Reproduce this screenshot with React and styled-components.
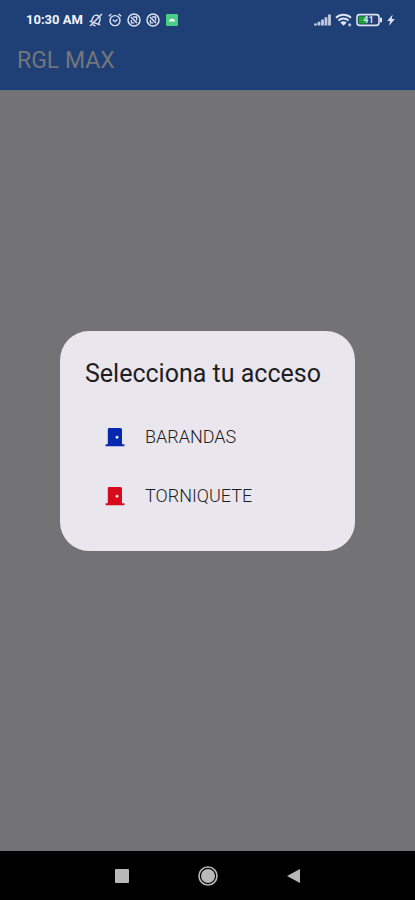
import React from 'react';
import styled, { createGlobalStyle } from 'styled-components';

const GlobalStyle = createGlobalStyle`
    * {
        box-sizing: border-box;
    }
    body {
        margin: 0;
        background-color: #737375;
        font-family: Roboto, sans-serif;
    }
`;
const Screen = styled.div`
    display: flex;
    flex-direction: column;
    min-height: 100vh;
`;
const Header = styled.header`
    background-color: #1f3f77;
    border-bottom: 1px solid #123a7c;
`;
const StatusBar = styled.div`
    display: flex;
    align-items: center;
    justify-content: space-between;
    height: 40px;
    padding: 0 20px 0 26px;
    color: #dde3f0;
`;
const StatusGroup = styled.div`
    display: flex;
    align-items: center;
    gap: ${props => props.$gap}px;
`;
const Clock = styled.span`
    margin-right: 1px;
    font-size: 13px;
    line-height: 16px;
    font-weight: 700;
    color: #f1f4fa;
`;
const StatusIcon = styled.svg`
    display: block;
    width: ${props => props.$width || 14}px;
    height: 14px;
    fill: none;
    stroke: currentColor;
    stroke-width: 1.4;
`;
const AppTitle = styled.h1`
    margin: 0;
    padding: 7px 17px 14px;
    font-size: 23px;
    line-height: 28px;
    font-weight: 400;
    color: #747678;
`;
const Content = styled.main`
    flex: 1;
    display: flex;
    flex-direction: column;
    justify-content: center;
    padding: 0 60px 59px;
`;
const Dialog = styled.section`
    padding: 26px 25px;
    border-radius: 29px;
    background-color: #e9e6ed;
`;
const DialogTitle = styled.h2`
    margin: 0 0 16px;
    font-size: 25px;
    line-height: 34px;
    font-weight: 400;
    color: #1e1d22;
    white-space: nowrap;
`;
const Option = styled.button`
    display: flex;
    align-items: center;
    gap: 20px;
    width: 100%;
    height: 59px;
    padding: 0 20px;
    border: none;
    background-color: transparent;
    font-family: inherit;
    font-size: 18px;
    line-height: 20px;
    font-weight: 300;
    color: #1e1d22;
    cursor: pointer;
`;
const DoorSvg = styled.svg`
    width: 20px;
    height: 20px;
    color: ${props => props.$color};
`;
const NavBar = styled.nav`
    display: flex;
    align-items: center;
    justify-content: center;
    gap: 62px;
    height: 49px;
    background-color: #000;
`;
const NavButton = styled.button`
    display: flex;
    padding: 0;
    border: none;
    background-color: transparent;
    cursor: pointer;
`;

const options = [
    { label: 'BARANDAS', color: '#0529ae' },
    { label: 'TORNIQUETE', color: '#d70b1c' },
];

const MutedIcon = () => (
    <StatusIcon viewBox='0 0 14 14'>
        <g transform='rotate(20 7 7)'>
            <path d='M3.2 10V6a3.8 3.8 0 0 1 7.6 0v4M1.4 10.2h11.2M5.4 12.6h3.2' />
        </g>
        <path d='M13 1 1 13' />
    </StatusIcon>
);

const AlarmIcon = () => (
    <StatusIcon viewBox='0 0 14 14'>
        <circle cx='7' cy='7.6' r='5' />
        <path d='M.8 3.2 3.4 1M13.2 3.2 10.6 1M4.7 6.7 7 8.7l2.6-2.2' />
    </StatusIcon>
);

const BlockedIcon = () => (
    <StatusIcon viewBox='0 0 14 14'>
        <circle cx='7' cy='7' r='6' strokeWidth='1.5' />
        <path d='m4 4 6 6' strokeWidth='1.6' />
        <path d='M6.2 4h3.4v3.4M4.4 7v2.8h2.8' strokeWidth='1.3' />
    </StatusIcon>
);

const AppIcon = () => (
    <StatusIcon viewBox='0 0 14 14'>
        <rect x='1' y='1' width='12' height='12' rx='1' fill='#4bce86' stroke='none' />
        <path d='M4 8.6a3 2.8 0 0 1 6 0z' fill='#eefaf3' stroke='none' />
    </StatusIcon>
);

const SignalIcon = () => (
    <StatusIcon $width={17} viewBox='0 0 17 14'>
        <path d='M1.5 12.5v-2M5 12.5V8.8M8.5 12.5V6.6M12 12.5V4.2M15.5 12.5V1.5' strokeWidth='2.8' opacity='0.85' />
    </StatusIcon>
);

const WifiIcon = () => (
    <StatusIcon $width={17} viewBox='0 0 17 14'>
        <path d='M1 4.8a10.8 10.8 0 0 1 15 0M3.4 7.6a7.2 7.2 0 0 1 10.2 0' strokeWidth='1.9' />
        <path d='M5.3 9.6a4.6 4.6 0 0 1 6.4 0l-3.2 3.2z' fill='currentColor' stroke='none' />
        <circle cx='14.7' cy='11.8' r='1.6' fill='currentColor' stroke='none' opacity='0.8' />
    </StatusIcon>
);

const BatteryIcon = () => (
    <StatusIcon $width={27} viewBox='0 0 27 14'>
        <rect x='1' y='1.6' width='22' height='10.8' rx='2.6' strokeWidth='1.6' />
        <path d='M25 4.8v4.4' strokeWidth='2' />
        <rect x='2.6' y='3.4' width='8' height='7.2' fill='#1fa62a' stroke='none' />
        <text
            x='12.4'
            y='10.2'
            textAnchor='middle'
            fontSize='9'
            fontWeight='700'
            fill='currentColor'
            stroke='none'
        >
            41
        </text>
    </StatusIcon>
);

const BoltIcon = () => (
    <StatusIcon $width={8} viewBox='0 0 8 14'>
        <path d='M5.6 1.5.2 8h2.9l-1 4.8L7.8 6H4.7z' fill='currentColor' stroke='none' />
    </StatusIcon>
);

const DoorIcon = ({ color }) => (
    <DoorSvg viewBox='0 0 20 20' $color={color} aria-hidden='true'>
        <path
            fill='currentColor'
            fillRule='evenodd'
            d='M4.2 1h11.2a1.6 1.6 0 0 1 1.6 1.6v14.6h2.4v2H.6v-2h2.2V2.4A1.4 1.4 0 0 1 4.2 1zm7.8 7.8a1.5 1.5 0 1 0 .1 0z'
        />
    </DoorSvg>
);

const App = () => {
    return (
        <>
            <GlobalStyle />
            <Screen>
                <Header>
                    <StatusBar>
                        <StatusGroup $gap={5}>
                            <Clock>10:30 AM</Clock>
                            <MutedIcon />
                            <AlarmIcon />
                            <BlockedIcon />
                            <BlockedIcon />
                            <AppIcon />
                        </StatusGroup>
                        <StatusGroup $gap={4}>
                            <SignalIcon />
                            <WifiIcon />
                            <BatteryIcon />
                            <BoltIcon />
                        </StatusGroup>
                    </StatusBar>
                    <AppTitle>RGL MAX</AppTitle>
                </Header>
                <Content>
                    <Dialog role='dialog' aria-labelledby='access-title'>
                        <DialogTitle id='access-title'>Selecciona tu acceso</DialogTitle>
                        {options.map(option => (
                            <Option key={option.label} type='button'>
                                <DoorIcon color={option.color} />
                                {option.label}
                            </Option>
                        ))}
                    </Dialog>
                </Content>
                <NavBar>
                    <NavButton type='button' aria-label='Recientes'>
                        <svg width='24' height='24' viewBox='0 0 24 24'>
                            <rect x='5' y='5' width='14' height='14' rx='1' fill='#b9b9b9' />
                        </svg>
                    </NavButton>
                    <NavButton type='button' aria-label='Inicio'>
                        <svg width='24' height='24' viewBox='0 0 24 24'>
                            <circle cx='12' cy='12' r='9' fill='none' stroke='#b9b9b9' strokeWidth='1.6' />
                            <circle cx='12' cy='12' r='7' fill='#b9b9b9' />
                        </svg>
                    </NavButton>
                    <NavButton type='button' aria-label='Atrás'>
                        <svg width='24' height='24' viewBox='0 0 24 24'>
                            <path d='M18 5v14L5 12z' fill='#b9b9b9' />
                        </svg>
                    </NavButton>
                </NavBar>
            </Screen>
        </>
    );
};

export default App;
